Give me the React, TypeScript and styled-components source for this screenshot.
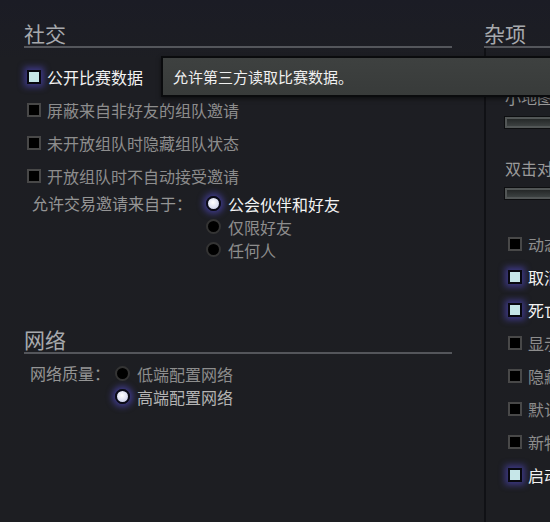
import styled, { createGlobalStyle } from 'styled-components';

const GlobalStyle = createGlobalStyle`
  html, body {
    margin: 0;
    background: #1d1e22;
    overflow: hidden;
  }
  body {
    font-family: "Noto Sans CJK SC", "Noto Sans", sans-serif;
  }
`;

const Page = styled.div`
  position: relative;
  display: flex;
  width: 550px;
  height: 522px;
  overflow: hidden;
  background: linear-gradient(#1b1c25 0px, #1d1e23 60px, #1d1e22 100%);
`;

const LeftColumn = styled.div`
  flex: none;
  width: 428px;
  margin-left: 24px;
`;

const RightColumn = styled.div`
  flex: none;
  width: 300px;
  margin-left: 32px;
  display: flex;
  flex-direction: column;
`;

const SectionTitle = styled.h2<{ $top: number }>`
  margin: ${p => p.$top}px 0 0;
  font-size: 21px;
  font-weight: normal;
  line-height: 26px;
  color: #a7a9ad;
  border-bottom: 2px solid #54565b;
`;

const CheckList = styled.div<{ $top?: number }>`
  display: flex;
  flex-direction: column;
  margin-top: ${p => p.$top ?? 0}px;
`;

const CheckRow = styled.label<{ $checked?: boolean }>`
  display: flex;
  align-items: center;
  gap: 6px;
  height: 33px;
  padding-left: 3px;
  font-size: 16px;
  white-space: nowrap;
  color: ${p => (p.$checked ? '#f2f2f2' : '#8d8d8d')};
`;

const Box = styled.span<{ $checked?: boolean }>`
  flex: none;
  width: 14px;
  height: 14px;
  box-sizing: border-box;
  border: 2px solid ${p => (p.$checked ? '#08080f' : '#484848')};
  background: ${p => (p.$checked ? '#c6e6e8' : '#000')};
  box-shadow: ${p => (p.$checked ? '0 0 6px 3px rgba(86, 76, 210, 0.55)' : 'none')};
`;

const OptionGroup = styled.div<{ $labelWidth: number; $indent: number; $top?: number }>`
  display: grid;
  grid-template-columns: ${p => p.$labelWidth}px auto;
  padding-left: ${p => p.$indent}px;
  margin-top: ${p => p.$top ?? 0}px;
`;

const GroupLabel = styled.span`
  height: 23px;
  line-height: 23px;
  font-size: 16px;
  color: #959595;
  white-space: nowrap;
`;

const RadioList = styled.div`
  display: flex;
  flex-direction: column;
`;

const RadioRow = styled.label<{ $selected?: boolean; $tone: string }>`
  display: flex;
  align-items: center;
  gap: 7px;
  height: 23px;
  font-size: 16px;
  white-space: nowrap;
  color: ${p => (p.$selected ? p.$tone : '#8d8d8d')};
`;

const Dot = styled.span<{ $selected?: boolean }>`
  flex: none;
  width: 15px;
  height: 15px;
  box-sizing: border-box;
  border-radius: 50%;
  border: 2px solid ${p => (p.$selected ? '#0a0a18' : '#343434')};
  background: ${p => (p.$selected ? 'radial-gradient(circle at 45% 40%, #ffffff 0%, #d4d8ee 70%)' : '#000')};
  box-shadow: ${p => (p.$selected ? '0 0 6px 3px rgba(90, 80, 220, 0.55)' : 'none')};
`;

const Panel = styled.div`
  flex: 1;
  border-left: 2px solid #101115;
  padding: 37px 0 0 19px;
`;

const SliderGroup = styled.div`
  display: flex;
  flex-direction: column;
  margin-bottom: 28px;
`;

const SliderLabel = styled.span`
  line-height: 24px;
  font-size: 16px;
  color: #9a9a9a;
  white-space: nowrap;
`;

const Slider = styled.div`
  margin-top: 8px;
  width: 200px;
  height: 11px;
  box-sizing: border-box;
  border: 2px solid #525656;
  outline: 1px solid #0d0e10;
  background: linear-gradient(#252828, #3c4141);
`;

const Tooltip = styled.div`
  position: absolute;
  left: 161px;
  top: 56px;
  width: 420px;
  height: 41px;
  box-sizing: border-box;
  display: flex;
  align-items: center;
  padding-left: 10px;
  border: 2px solid #0a0b0d;
  background: linear-gradient(#3e4140, #383b3a);
  font-size: 15px;
  color: #f0f0f0;
  box-shadow: 0 2px 4px rgba(0, 0, 0, 0.5);
`;

const social = [
  { text: '公开比赛数据', checked: true },
  { text: '屏蔽来自非好友的组队邀请' },
  { text: '未开放组队时隐藏组队状态' },
  { text: '开放组队时不自动接受邀请' },
];

const trade = [
  { text: '公会伙伴和好友', selected: true },
  { text: '仅限好友' },
  { text: '任何人' },
];

const network = [
  { text: '低端配置网络' },
  { text: '高端配置网络', selected: true },
];

const misc = [
  { text: '动态英雄肖像' },
  { text: '取消攻击指令', checked: true },
  { text: '死亡时显示镜头', checked: true },
  { text: '显示伤害数字' },
  { text: '隐藏提示信息' },
  { text: '默认使用快速施法' },
  { text: '新物品提示' },
  { text: '启动时播放动画', checked: true },
];

type Item = { text: string; checked?: boolean; selected?: boolean };

function Checks({ items }: { items: Item[] }) {
  return (
    <>
      {items.map(item => (
        <CheckRow key={item.text} $checked={item.checked}>
          <Box $checked={item.checked} />
          {item.text}
        </CheckRow>
      ))}
    </>
  );
}

function Radios({ items, tone = '#f2f2f2' }: { items: Item[]; tone?: string }) {
  return (
    <RadioList>
      {items.map(item => (
        <RadioRow key={item.text} $selected={item.selected} $tone={tone}>
          <Dot $selected={item.selected} />
          {item.text}
        </RadioRow>
      ))}
    </RadioList>
  );
}

export default function App() {
  return (
    <Page>
      <GlobalStyle />
      <LeftColumn>
        <SectionTitle $top={20}>社交</SectionTitle>
        <CheckList $top={12}>
          <Checks items={social} />
        </CheckList>
        <OptionGroup $labelWidth={174} $indent={8}>
          <GroupLabel>允许交易邀请来自于：</GroupLabel>
          <Radios items={trade} />
        </OptionGroup>

        <SectionTitle $top={65}>网络</SectionTitle>
        <OptionGroup $labelWidth={85} $indent={6} $top={8}>
          <GroupLabel>网络质量：</GroupLabel>
          <Radios items={network} tone="#b4b4b4" />
        </OptionGroup>
      </LeftColumn>

      <RightColumn>
        <SectionTitle $top={20}>杂项</SectionTitle>
        <Panel>
          <SliderGroup>
            <SliderLabel>小地图图标缩放</SliderLabel>
            <Slider />
          </SliderGroup>
          <SliderGroup>
            <SliderLabel>双击对自己施法</SliderLabel>
            <Slider />
          </SliderGroup>
          <CheckList>
            <Checks items={misc} />
          </CheckList>
        </Panel>
      </RightColumn>

      <Tooltip>允许第三方读取比赛数据。</Tooltip>
    </Page>
  );
}
